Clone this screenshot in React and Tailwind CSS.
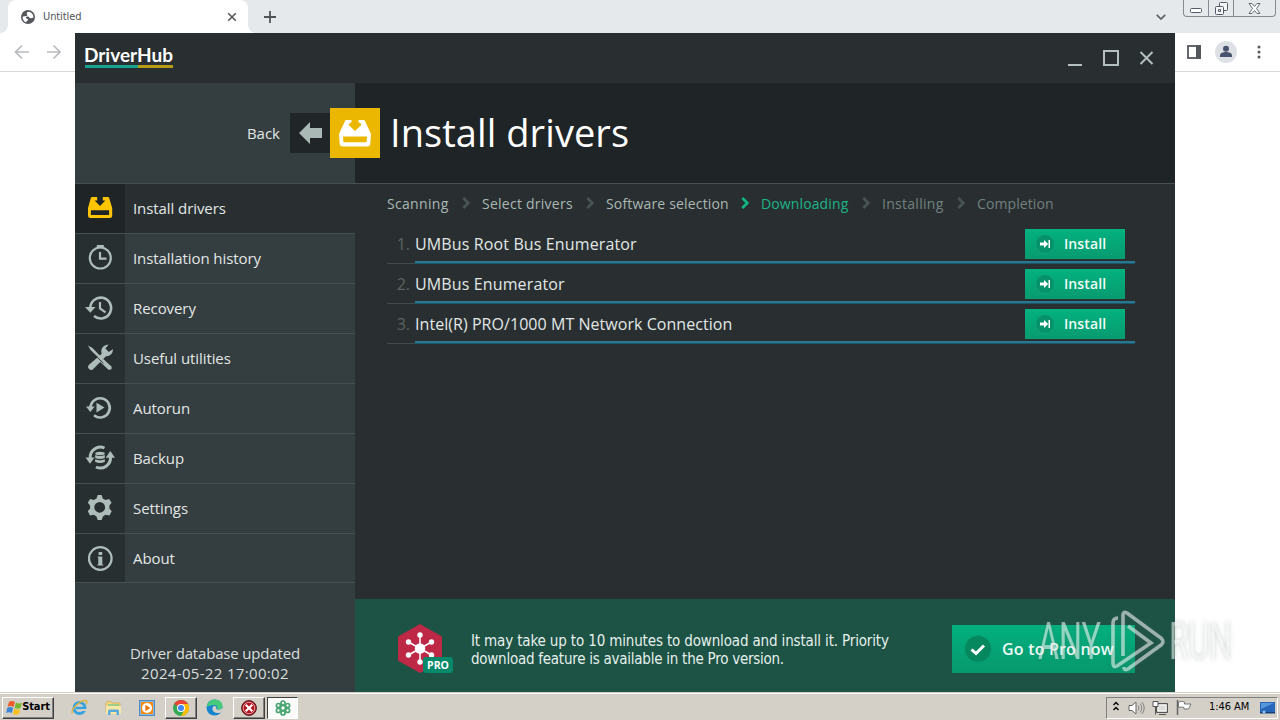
import React from "react";

const OPEN = "font-['Open_Sans',sans-serif]";
const TAHOMA = "font-['DejaVu_Sans_Condensed','DejaVu_Sans',sans-serif]";

function InstallIcon({ size, color }) {
  return (
    <svg width={size} height={size} viewBox="0 0 32 32" fill={color}>
      <path fillRule="evenodd" d="M7.500 3h5v2.200q-2 .3-3 2.500L16 14l6.500-6.300q-1-2.200-3-2.500V3h5q1.200 0 1.600 1.200L32 17l-.7 10q-.3 2.500-3 2.500H3.700q-2.700 0-3-2.500L0 17 5.900 4.200Q6.300 3 7.500 3zM4 19.500l.3 4.700q.1 1 1 1h21.400q.9 0 1-1l.3-4.700z" />
    </svg>
  );
}

const g = "#aebdb9";

const ICONS = {
  install: <path fill="#fdc400" fillRule="evenodd" d="M6 3h5.200v3.600H8.600L14 12l5.400-5.400h-2.600V3H22q.8 0 1.100.8L26.200 14v7.500q0 2.500-2.300 2.500H4.300Q2 24 2 21.500V14L4.900 3.800Q5.200 3 6 3zM4.900 16.200v4.800h18.200v-4.800z" />,
  history: (
    <g fill="none" stroke={g}>
      <circle cx="14.300" cy="14" r="10.500" strokeWidth="2.200" />
      <path d="M10.800 1h7v3h-7z" fill={g} stroke="none" />
      <path d="M14 8v6.700h6.500" strokeWidth="2.200" />
    </g>
  ),
  recovery: (
    <g fill="none" stroke={g}>
      <path d="M4.300 14.500A10.400 10.400 0 1 1 8 22" strokeWidth="2.600" />
      <path d="M-1 13h10.500L4.300 18.800z" fill={g} stroke="none" />
      <path d="M14 8v6.500l5.500 3.800" strokeWidth="2.200" />
    </g>
  ),
  tools: (
    <g>
      <path d="M2 1.500l4.500 2.500 8 8.300-1.600 1.600L4.500 6z" fill={g} />
      <path d="M15.700 9.700q-1.700-6 3.500-8.500l3.500-.8-3.300 4.200 3.500 3.400 4-3.100q.4 6.700-7.200 7.700L7 25.200Q5 27 3 25t-.3-4z" fill={g} />
      <path d="M17 14.700l8.200 7.500q1.700 4-2.700 3.500l-8.300-7.700z" fill={g} />
      <path d="M9.500 11.500l8 8" stroke="#282f31" strokeWidth=".9" />
    </g>
  ),
  autorun: (
    <g fill="none" stroke={g}>
      <path d="M4.500 14A9.600 9.600 0 1 1 8 21.300" strokeWidth="2.700" />
      <path d="M0 12.500h8.800L4.300 18z" fill={g} stroke="none" />
      <path d="M10.500 8.800l8 4.700-8 5z" fill={g} stroke="none" />
    </g>
  ),
  backup: (
    <g fill="none" stroke={g}>
      <path d="M4.200 14A10.200 10.200 0 0 1 18.500 4" strokeWidth="3" />
      <path d="M24.500 13A10.200 10.200 0 0 1 10 23" strokeWidth="3" />
      <path d="M-.5 13.500h9L4 19.800zM19.700 13.700h9.300L24.300 7z" fill={g} stroke="none" />
      <g fill={g} stroke="none"><ellipse cx="14" cy="9.500" rx="4.800" ry="1.700" /><path d="M9.200 11q4.800 2 9.600 0v3q-4.800 2-9.600 0zM9.200 15.300q4.800 2 9.600 0V18q-4.800 2-9.600 0z" /></g>
    </g>
  ),
  settings: (
    <path fill={g} fillRule="evenodd" transform="translate(0 -.6)" d="M11.700 1.500h4l1 3.500 2.800 1.700 3.600-1.100 2.500 3.800-2.200 2.800v3l2.300 2.700-2.300 4.200-3.900-.8-2.600 1.700-1.200 3.500h-4l-1.200-3.500-2.700-1.700-3.800.8-2.200-4.200 2.300-2.700v-3L1.800 9.400l2.300-3.800 3.700 1.100L10.500 5zM13.700 8.500a5.400 5.400 0 1 0 0 10.800a5.400 5.400 0 1 0 0-10.800z" />
  ),
  about: (
    <g>
      <circle cx="14.300" cy="14.500" r="11.300" fill="none" stroke={g} strokeWidth="2.200" />
      <path fill={g} d="M12.600 8h3.600v3h-3.600zM11.700 12.500h4.600v8h1v1h-6v-1h1v-7h-.6z" />
    </g>
  ),
};

const MENU = [
  ["install", "Install drivers"],
  ["history", "Installation history"],
  ["recovery", "Recovery"],
  ["tools", "Useful utilities"],
  ["autorun", "Autorun"],
  ["backup", "Backup"],
  ["settings", "Settings"],
  ["about", "About"],
];

const STEPS = [
  ["Scanning", "w-[62px] tracking-[0.32px]", "text-[#a9b8b4]", "#4a5354"],
  ["Select drivers", "w-[91px] tracking-[0.25px]", "text-[#a9b8b4]", "#4a5354"],
  ["Software selection", "w-[122px] tracking-[0.17px]", "text-[#a9b8b4]", "#10b583"],
  ["Downloading", "w-[88px] tracking-[0.12px]", "text-[#1bb587]", "#4a5354"],
  ["Installing", "w-[62px] tracking-[0.28px]", "text-[#71807e]", "#4a5354"],
  ["Completion", "w-[77px] tracking-[0.1px]", "text-[#71807e]", null],
];

const DRIVERS = ["UMBus Root Bus Enumerator", "UMBus Enumerator", "Intel(R) PRO/1000 MT Network Connection"];

function Browser() {
  return (
    <div className="flex h-[692px] flex-col bg-white">
      <div className="flex h-[33px] shrink-0 bg-[#e6e9ec]">
        <div className="w-2 bg-white"><div className="h-full rounded-br-lg bg-[#e6e9ec]" /></div>
        <div className="flex w-[240px] items-center rounded-t-lg bg-white pl-[13px] pr-[11px]">
          <svg width="14" height="14" viewBox="0 0 14 14">
            <circle cx="7" cy="7" r="7" fill="#54585d" />
            <path fill="#fff" d="M7.800 1.700C6 2 5.200 3 6 4.200c.8 1 .2 1.800-1 1.900-1.300.2-2 .7-3.300.3-.4 2.500 1 5 3.300 5.900.2-1.500 2-1 2-2.600C7 8.300 5.300 9 4.900 7.900c-.2-1 .8-1.400 1.900-1.400 1.600 0 1.400 1.800 2.900 1.800 1.100 0 1.600-.7 2.700-.5C12.700 5 10.900 2.300 7.800 1.700z" />
          </svg>
          <span className={`ml-2 flex-1 text-[11px] leading-[33px] tracking-[-0.1px] text-[#50555a] ${TAHOMA}`}>Untitled</span>
          <svg width="10" height="10" viewBox="0 0 10 10"><path d="M1.200 1.200l7.600 7.600m0-7.600L1.200 8.800" stroke="#55595e" strokeWidth="1.600" /></svg>
        </div>
        <div className="w-2 bg-white"><div className="h-full rounded-bl-lg bg-[#e6e9ec]" /></div>
        <div className="flex w-[28px] items-center justify-center pr-2"><svg className="ml-2 shrink-0" width="12" height="12"><path d="M6 0v12M0 6h12" stroke="#505459" strokeWidth="1.800" /></svg></div>
        <div className="flex flex-1 items-center justify-end pr-[17px]">
          <svg width="10" height="6" viewBox="0 0 10 6"><path d="M.8.800L5 5 9.200.800" fill="none" stroke="#5c6065" strokeWidth="1.700" /></svg>
        </div>
        <div className="flex h-[17px] w-[93px] rounded-b-[4px] border border-t-0 border-[#858b91]">
          <div className="flex w-[25px] items-end justify-center border-r border-[#858b91] pb-[3px]"><svg width="12" height="5"><rect x=".5" y=".5" width="11" height="4" rx="1" fill="#fff" stroke="#555b64" /></svg></div>
          <div className="flex w-[25px] items-center justify-center border-r border-[#858b91]"><svg width="13" height="13" fill="#f5f6f8" stroke="#555b64"><rect x="4.500" y=".5" width="8" height="8" rx="1" /><rect x=".5" y="4.500" width="8" height="8" rx="1" /><path d="M3.500 7.500h2v2h-2z" /></svg></div>
          <div className="flex flex-1 items-center justify-center"><svg width="13" height="11" viewBox="0 0 13 11"><path d="M1 .5h3l2.500 3 2.500-3h3L8.500 5.500l3.500 5H9l-2.500-3-2.500 3H1l3.500-5z" fill="#fff" stroke="#555b64" strokeWidth=".9" /></svg></div>
        </div>
        <div className="w-[4px]" />
      </div>
      <div className="flex h-[39px] shrink-0 items-center border-b border-[#d5d7d9]">
        <svg className="ml-[14px]" width="47" height="16" fill="none" stroke="#b8babd" strokeWidth="1.700"><path d="M15 8H1.500M8 1.500L1.500 8 8 14.500M33 8h13M39.500 1.500L46 8l-6.500 6.500" /></svg>
        <div className="flex-1" />
        <svg width="14" height="14" className="mr-[14px]"><rect x="1" y="1" width="12" height="12" fill="#fff" stroke="#54585d" strokeWidth="1.800" /><path d="M9 0h5v14H9z" fill="#54585d" /></svg>
        <svg width="22" height="22" className="mr-[20px]"><circle cx="11" cy="11" r="11" fill="#dde1e5" /><circle cx="11" cy="7.700" r="3" fill="#47526d" /><path d="M5 16v-1.500c0-2.500 3-3.500 6-3.500s6 1 6 3.500V16z" fill="#47526d" /></svg>
        <svg width="4" height="14" className="mr-[19px]" fill="#54585d"><circle cx="2" cy="2" r="1.500" /><circle cx="2" cy="7" r="1.500" /><circle cx="2" cy="12" r="1.500" /></svg>
      </div>
    </div>
  );
}

function Sidebar() {
  return (
    <div className="flex w-[280px] shrink-0 flex-col bg-[#343d3f]">
      <div className="flex h-[100px] shrink-0 items-center justify-end">
        <span className="mr-[10px] text-[15px] text-[#e2e7e6]">Back</span>
        <div className="flex h-10 w-10 items-center justify-center bg-[#202628]">
          <svg className="ml-[2px]" width="24" height="22" viewBox="0 0 24 22"><path d="M0 11L11 0v6h12v10H11v6z" fill="#aab9b5" /></svg>
        </div>
        <div className="z-10 -mr-[25px] flex h-[50px] w-[50px] items-center justify-center bg-[#ebb700]"><InstallIcon size={32} color="#fff" /></div>
      </div>
      {MENU.map(([id, label], i) => (
        <div key={id} className={`flex shrink-0 border-t border-[#465053] ${i === 0 ? "bg-[#292f31]" : ""} ${i === 7 ? "h-[49px]" : "h-[50px]"}`}>
          <div className={`flex w-[50px] justify-center pt-[10px] ${i === 0 ? "bg-[#1f2527]" : "bg-[#282f31]"}`}>
            <svg className="overflow-visible" width="28" height="28" viewBox="0 0 28 28">{ICONS[id]}</svg>
          </div>
          <span className="pl-2 text-[15px] leading-[49px] tracking-[-0.08px] text-[#e2e7e6]">{label}</span>
        </div>
      ))}
      <div className="flex flex-1 flex-col justify-end border-t border-[#465053] pb-[9px] text-center text-[15px] leading-5 text-[#d9dfde]">
        <span className="tracking-[-0.17px]">Driver database updated</span>
        <span className="tracking-[0.33px]">2024-05-22 17:00:02</span>
      </div>
    </div>
  );
}

function DriverHub() {
  return (
    <div className={`absolute left-[75px] top-[33px] flex h-[659px] w-[1100px] flex-col bg-[#292f31] text-white ${OPEN}`}>
      <div className="flex h-[50px] shrink-0 items-center bg-[#292f31] pl-[10px] pr-[20px]">
        <div className="mb-[4px] flex w-[88px] flex-col">
          <span className="-ml-px whitespace-nowrap font-['Lato',sans-serif] text-[19px] font-bold leading-[20px]">DriverHub</span>
          <div className="flex h-[3px]"><div className="w-[53px] bg-[#16a394]" /><div className="flex-1 bg-[#b79c16]" /></div>
        </div>
        <div className="flex-1" />
        <svg width="88" height="18" fill="none" stroke="#b3c0bd" strokeWidth="2"><path d="M1 16h14M73.500 3l12 12m0-12l-12 12" /><rect x="37" y="2" width="14" height="14" /></svg>
      </div>
      <div className="flex min-h-0 flex-1">
        <Sidebar />
        <div className="flex min-w-0 flex-1 flex-col">
          <div className="flex h-[100px] shrink-0 items-center bg-[#1f2527] pb-[2px] pl-[35px]">
            <h1 className="whitespace-nowrap text-[38px] leading-none tracking-[0.07px]">Install drivers</h1>
          </div>
          <div className="flex flex-1 flex-col border-t border-[#465053] pl-8 pr-10">
            <div className="flex h-10 items-center pb-[2px] text-[14px]">
              {STEPS.map(([s, w, c, arrow]) => (
                <React.Fragment key={s}>
                  <span className={`shrink-0 whitespace-nowrap ${w} ${c}`}>{s}</span>
                  {arrow && <span className="flex w-[33px] shrink-0 justify-center"><svg width="8" height="12" viewBox="0 0 8 12"><path d="M1.300 1l5 5-5 5" fill="none" stroke={arrow} strokeWidth="2.600" /></svg></span>}
                </React.Fragment>
              ))}
            </div>
            {DRIVERS.map((d, i) => (
              <div key={d} className="flex h-10 text-[16px] leading-10">
                <div className="w-7 border-b border-[#424b4d] pr-[5px] text-right text-[#59635f]">{i + 1}.</div>
                <div className="flex flex-1 items-start justify-between pr-[10px] shadow-[inset_0_-1px_0_#1d5568,inset_0_-3px_0_#28788f]">
                  <span className={`h-[37px] text-[#e2e7e6] ${i === 2 ? "tracking-[0.05px]" : "tracking-[0.13px]"}`}>{d}</span>
                  <div className="mt-[5px] flex h-[30px] w-[100px] items-center bg-linear-to-b from-[#02b17e] to-[#089b70] pl-[10px]">
                    <svg width="20" height="20" viewBox="0 0 20 20"><circle cx="10" cy="10" r="9.500" fill="#06936b" stroke="#16ad82" strokeWidth=".6" /><path d="M5 8.600h4V6l4.200 4L9 14v-2.600H5zM13.500 6h1.500v8h-1.500z" fill="#fff" /></svg>
                    <span className="ml-[9px] text-[14px] font-semibold leading-[30px] tracking-[0.1px] text-[#effcf7]">Install</span>
                  </div>
                </div>
              </div>
            ))}
          </div>
          <div className="flex h-[93px] shrink-0 items-start bg-[#1c5345]">
            <svg className="ml-[42px] mt-[24px] shrink-0" width="58" height="52" viewBox="0 0 58 52">
              <path d="M23 1l22 12.500v24L23 50 1 37.500v-24z" fill="#bd2846" />
              <path d="M23 12v27M11.500 19l23 13m0-13l-23 13" stroke="#fff" strokeWidth="1.500" />
              <g fill="#fff"><circle cx="23" cy="25.500" r="5.200" /><circle cx="23" cy="12" r="2.700" /><circle cx="23" cy="39" r="2.700" /><circle cx="11.500" cy="19" r="2.700" /><circle cx="34.500" cy="19" r="2.700" /><circle cx="11.500" cy="32" r="2.700" /><circle cx="34.500" cy="32" r="2.700" /></g>
              <rect x="26" y="34" width="30" height="16" rx="3" fill="#078969" />
              <text x="41" y="46" textAnchor="middle" fill="#fff" fontFamily="Open Sans" fontWeight="700" fontSize="10.500">PRO</text>
            </svg>
            <p className={`ml-[16px] mt-[33px] flex-1 whitespace-nowrap text-[15px] leading-[18px] text-[#e5efec] ${TAHOMA}`}>
              <span className="tracking-[-0.15px]">It may take up to 10 minutes to download and install it. Priority</span><br /><span className="tracking-[-0.25px]">download feature is available in the Pro version.</span>
            </p>
            <div className="mr-10 mt-[26px] flex h-12 w-[183px] items-center bg-linear-to-b from-[#02b17e] to-[#07986e] pl-[12px]">
              <svg width="28" height="28" viewBox="0 0 28 28"><circle cx="14" cy="14" r="13.500" fill="#06885f" stroke="#079f74" /><path d="M7.500 14.500l4.500 4 8-8" fill="none" stroke="#fff" strokeWidth="3" /></svg>
              <span className="ml-[10px] whitespace-nowrap text-[16px] font-semibold tracking-[0.2px] text-[#effcf7]">Go to Pro now</span>
            </div>
          </div>
        </div>
      </div>
    </div>
  );
}

function Watermark() {
  return (
    <svg className="pointer-events-none absolute left-[1034px] top-[600px] overflow-visible" width="240" height="84" viewBox="0 -6 240 84" style={{ filter: "drop-shadow(0 0 2px rgba(90,100,100,.5))" }}>
      <g opacity=".55" fill="#fff" fontFamily="Roboto" fontWeight="400" fontSize="51">
        <text x="4" y="53" textLength="63" lengthAdjust="spacingAndGlyphs">ANY</text>
        <text x="135" y="53" textLength="63" lengthAdjust="spacingAndGlyphs">RUN</text>
        <path d="M89 50V9q0-4 4-2l34 25q4 4 0 7L94 63q-4 2-4-2M84 12q-5 0-5 5v40q0 5 4 3l34-23-23-17" fill="none" stroke="#fff" strokeWidth="3.600" />
      </g>
    </svg>
  );
}

function Chrome() {
  return (
    <svg width="16" height="16" viewBox="0 0 16 16"><circle cx="8" cy="8" r="8" fill="#34a853" /><path d="M8 8L1.100 4A8 8 0 0 1 15 4z" fill="#ea4335" /><path d="M8 4h7a8 8 0 0 1-7 12l3.500-6z" fill="#fbbc04" /><circle cx="8" cy="8" r="4" fill="#fff" /><circle cx="8" cy="8" r="3" fill="#4285f4" /></svg>
  );
}

function Taskbar() {
  const raised = "flex h-[22px] items-center justify-center border border-b-[#404040] border-l-white border-r-[#404040] border-t-white shadow-[inset_-1px_-1px_0_#808080]";
  return (
    <div className="flex h-7 items-center border-t border-[#d4d0c8] bg-[#d4d0c8] pt-[2px] shadow-[inset_0_1px_0_#fff]">
      <div className={`ml-[2px] w-[52px] ${raised}`}>
        <svg className="shrink-0" width="17" height="16" viewBox="0 0 17 16"><path d="M3 2q3-2 6 0L7.500 7q-3-2-6 0z" fill="#ed5c2a" /><path d="M10 2.500q3 2 6 0L14.500 8q-3 1.500-6 0z" fill="#75b82f" /><path d="M1.200 8q3-2 6 0L5.700 13q-2.700-1.500-5.500 0z" fill="#3a87d6" /><path d="M8.200 8.800q3 1.800 6 0L13 14q-3 1.500-6.200 0z" fill="#f7bf22" /></svg>
        <span className={`-ml-px text-[11px] font-bold tracking-[-0.1px] text-black ${TAHOMA}`}>Start</span>
      </div>
      <svg className="ml-[17px]" width="17" height="17" viewBox="0 0 17 17"><circle cx="8.500" cy="9" r="5.500" fill="none" stroke="#36a2df" strokeWidth="3" /><path d="M5 9h9" stroke="#36a2df" strokeWidth="2.500" /><path d="M10 11h6" stroke="#d4d0c8" strokeWidth="2" /><path d="M1.500 14.500C-1 11 9 1 14.500 1.500q2.500.5.500 4" fill="none" stroke="#dfb33c" strokeWidth="1.400" /></svg>
      <svg className="ml-[17px]" width="17" height="16" viewBox="0 0 17 16"><path d="M1 3l1-1.500h4L7 3h8v9H1z" fill="#f2d680" stroke="#cda94b" strokeWidth=".7" /><path d="M3 4h11v4H3z" fill="#9bd08b" /><path d="M1 6h15v8H1z" fill="#f7e6a4" /><path d="M3 15v-4q0-1.500 1.500-1.500h8Q14 9.500 14 11v4h-2.500v-3h-6v3z" fill="#58a9dd" /></svg>
      <svg className="ml-[17px]" width="16" height="16" viewBox="0 0 16 16"><rect x=".5" y=".5" width="15" height="15" fill="#83b9e6" stroke="#5489bd" /><rect x="2" y="2" width="12" height="12" fill="#f58a12" /><circle cx="8" cy="8" r="5" fill="#fff" /><path d="M6.300 4.800L11.500 8l-5.200 3.200z" fill="#ee7610" /></svg>
      <div className={`ml-[10px] w-[32px] ${raised}`}><Chrome /></div>
      <svg className="ml-[9px]" width="17" height="17" viewBox="0 0 17 17"><circle cx="8.500" cy="8.500" r="8" fill="#1683ce" /><path d="M.7 8C1.700 2 6.200.5 9 .5c5.500 0 8 4 7.500 7.500-.6 3-4 3.200-5.500 2 1-1.600 0-4-3-4-3.500 0-6 1-7.300 2z" fill="#45cb7b" /><path d="M8 7c-3 1.500-1.800 7 3.500 7 2 0 3.400-.5 4.500-1.500L17 9l-3 1.500q-2 .6-4-.4c1.200-1.500.2-3-2-3.100z" fill="#d4d0c8" /></svg>
      <div className={`ml-[10px] w-[32px] ${raised}`}><svg width="16" height="16" viewBox="0 0 16 16"><circle cx="8" cy="8" r="7.400" fill="#b61622" stroke="#4e1a1c" /><circle cx="8" cy="8" r="5.800" fill="none" stroke="#e9b9bc" strokeWidth=".8" /><path d="M4.700 4.700l6.600 6.600m0-6.600l-6.600 6.600" stroke="#fff" strokeWidth="2" /></svg></div>
      <div className="ml-[2px] flex h-[22px] w-[31px] items-center justify-center border border-b-white border-l-[#404040] border-r-white border-t-[#404040] bg-[#fbfbfa]">
        <svg width="16" height="16" viewBox="0 0 16 16"><g fill="none" stroke="#4aa573" strokeWidth="1.700"><circle cx="8" cy="8" r="2.500" /><circle cx="8" cy="3" r="2" /><circle cx="8" cy="13" r="2" /><circle cx="3.400" cy="5.500" r="2" /><circle cx="12.600" cy="5.500" r="2" /><circle cx="3.400" cy="10.500" r="2" /><circle cx="12.600" cy="10.500" r="2" /></g></svg>
      </div>
      <div className="flex-1" />
      <div className="mr-[2px] flex h-[22px] w-[172px] items-center border border-b-white border-l-[#808080] border-r-white border-t-[#808080]">
        <svg className="-mt-[3px] ml-[6px]" width="6" height="10" fill="none" stroke="#000" strokeWidth="1.400"><path d="M.5 4L3 1.500 5.500 4M.5 9L3 6.500 5.500 9" /></svg>
        <svg className="ml-[9px]" width="17" height="14" viewBox="0 0 17 14"><path d="M1 4.500h3L8 1v12L4 9.500H1z" fill="#fff" stroke="#666" /><path d="M10 4.500q2 2.500 0 5M12 2.500q3.500 4.500 0 9M14 1q4.500 6 0 12" fill="none" stroke="#777" strokeWidth=".9" /></svg>
        <svg className="ml-[7px]" width="17" height="16" viewBox="0 0 17 16"><path d="M4.500 3.500h11v9h-11z" fill="#bcbab5" stroke="#555" /><path d="M6 5h8v6H6z" fill="#ddd" stroke="#fff" /><path d="M1 1.500h5v5H1zM3.500 6.500v8M7 14.500h7" fill="#fff" stroke="#555" /></svg>
        <svg className="ml-[7px]" width="16" height="15" viewBox="0 0 16 15"><path d="M1.500 0v15" stroke="#666" strokeWidth="1.500" /><path d="M2.500 2q3-1.500 6 0v2h6.500L12.500 9H8V7.500q-3-1-5.500 0z" fill="#fff" stroke="#777" /></svg>
        <span className={`ml-[17px] whitespace-nowrap text-[11px] tracking-[-0.05px] text-black ${TAHOMA}`}>1:46 AM</span>
        <svg className="ml-auto mr-[2px]" width="15" height="14" viewBox="0 0 15 14"><path d="M0 1h15v10H0z" fill="#2866b9" /><path d="M1 2h13L1 8z" fill="#5596db" /><path d="M0 11h15v1.500H0z" fill="#183e78" /><circle cx="4" cy="11" r="1.500" fill="#9ac4ec" /></svg>
      </div>
    </div>
  );
}

export default function App() {
  return (
    <div className="relative h-[720px] w-[1280px] overflow-hidden bg-white">
      <Browser />
      <DriverHub />
      <Taskbar />
      <Watermark />
    </div>
  );
}
